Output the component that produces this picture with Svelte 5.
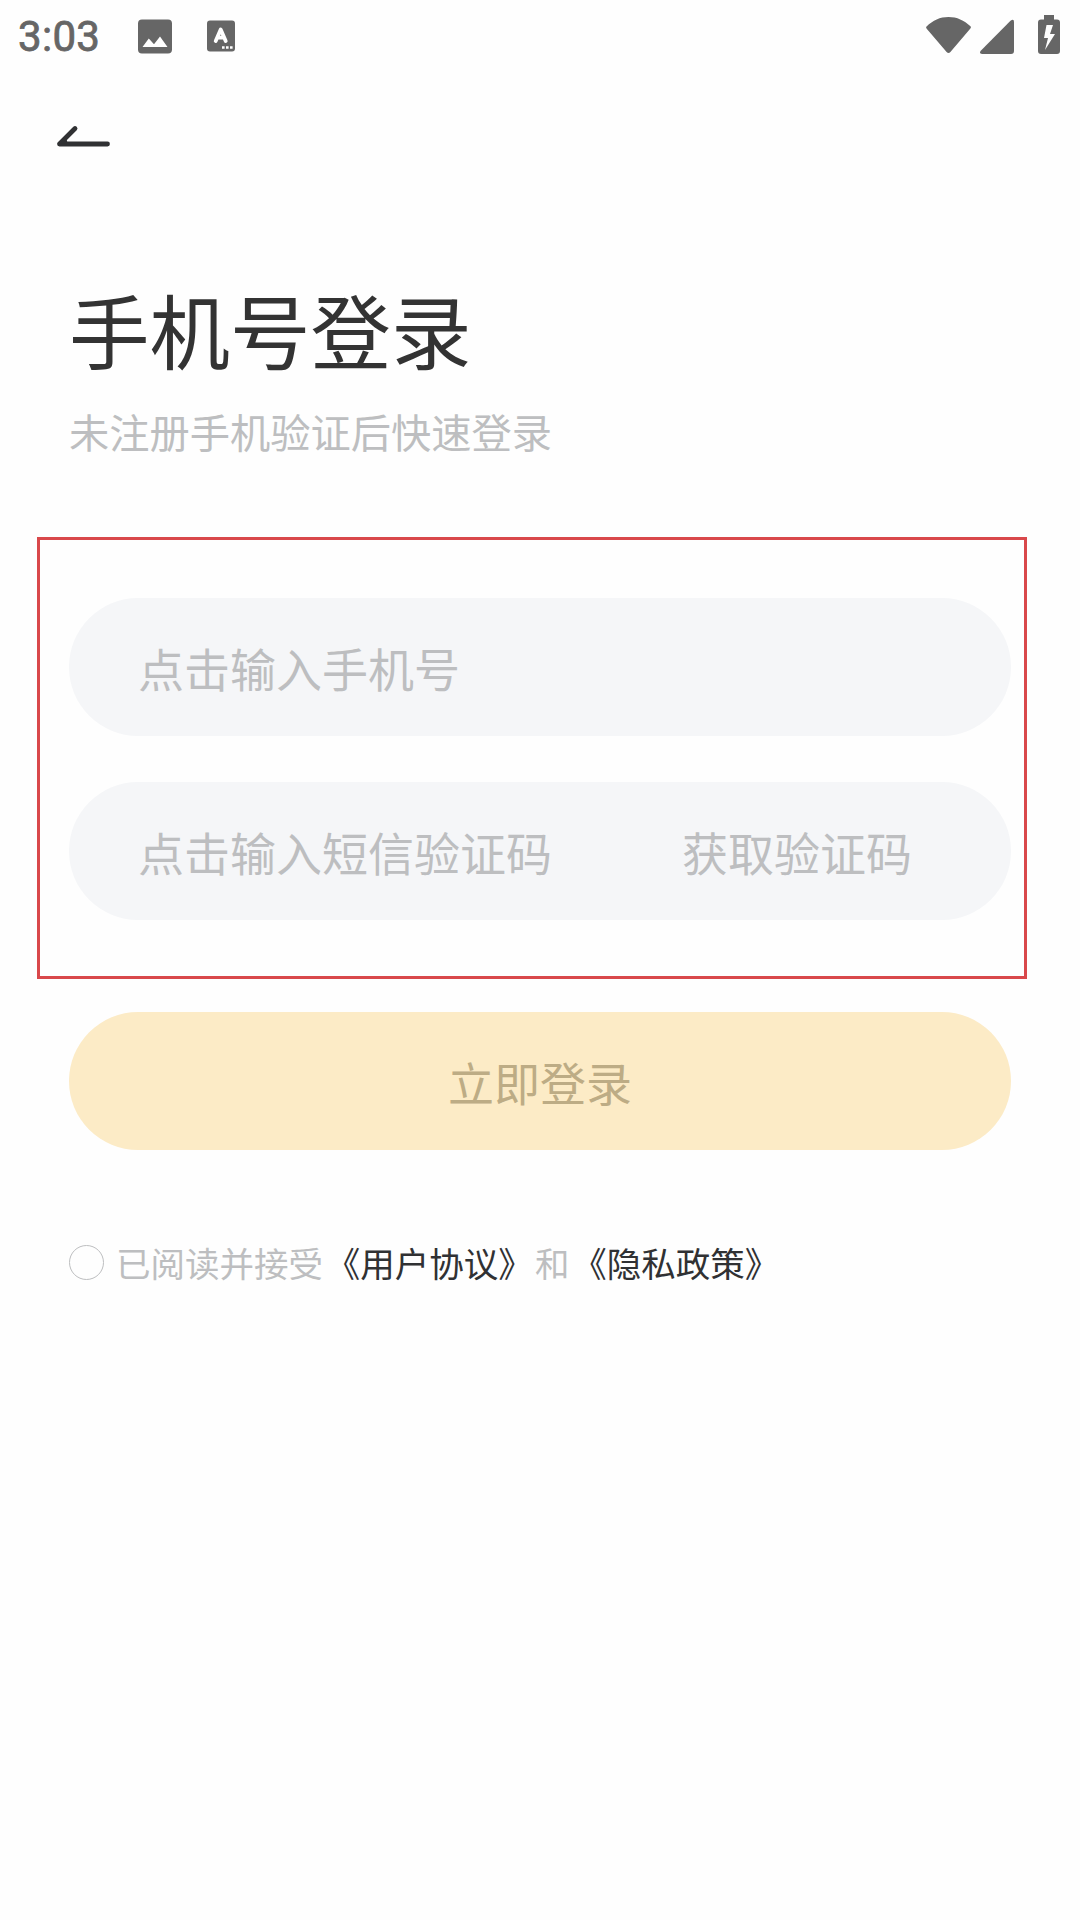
<script>
  let agreed = $state(false);
</script>

<main class="screen">
  <header class="status">
    <span class="time">3:03</span>
    <svg class="photo" width="34" height="35" viewBox="0 0 34 35">
      <path fill="#666" fill-rule="evenodd" d="M4 0.5h26a4 4 0 0 1 4 4v26a4 4 0 0 1-4 4H4a4 4 0 0 1-4-4v-26a4 4 0 0 1 4-4zM4.5 28h25L22 17.5l-6 7.7-5.200-5.700z" />
    </svg>
    <svg class="lang" width="28" height="32" viewBox="0 0 28 32">
      <rect y="0.500" width="28" height="31" rx="3" fill="#666" />
      <path d="M8.700 21 13.700 9.500 18.700 21M10.500 17.700h6.500" fill="none" stroke="#fff" stroke-width="3.800" stroke-linecap="round" stroke-linejoin="round" />
      <path d="M15 26.200h2.600v2.600H15zM19 26.200h2.600v2.600H19zM23 26.200h2.600v2.600H23z" fill="#fff" />
    </svg>
    <svg class="signals" width="136" height="42" viewBox="925 13 136 42">
      <g fill="#666">
        <path d="M926.500 26.500C933 20.300 940 17 948.500 17s15.500 3.300 22 9.300q1 1-.1 2.300l-20 23.500q-1.900 2-3.800 0l-19.900-23.300q-1.200-1.300-.2-2.300z" />
        <path d="M981 50.500 1010.500 20.700q3.500-2.200 3.500 1.300v29q0 3-3 3h-29q-3.500-.5-1-3.500z" />
        <path fill-rule="evenodd" d="M1044 15h10v4.500h3q3 0 3 3V51q0 3-3 3h-16q-3 0-3-3V22.500q0-3 3-3h3zM1046.500 25l-2.500 13h4l-3 12 10-16h-5l3-9z" />
      </g>
    </svg>
  </header>

  <nav class="nav">
    <svg width="54" height="22" viewBox="56 125 54 22">
      <path d="M107.500 144H59.500L75 128.500" fill="none" stroke="#303133" stroke-width="4.800" stroke-linecap="round" stroke-linejoin="round" />
      <path d="M59 143.500l7-6.500 1.500 6z" fill="#303133" />
    </svg>
  </nav>

  <section class="intro">
    <h1>手机号登录</h1>
    <p>未注册手机验证后快速登录</p>
  </section>

  <section class="fields">
    <div class="field"><span>点击输入手机号</span></div>
    <div class="field">
      <span>点击输入短信验证码</span>
      <span class="code">获取验证码</span>
    </div>
  </section>

  <button class="submit">立即登录</button>

  <footer class="terms">
    <button class="check" class:agreed aria-label="同意" onclick={() => (agreed = !agreed)}></button>
    <span>已阅读并接受</span><span class="link">《用户协议》</span><span class="and">和</span><span class="link">《隐私政策》</span>
  </footer>
</main>

<style>
  :global(body) {
    margin: 0;
    background: #fefefe;
  }
  .screen {
    box-sizing: border-box;
    width: 1080px;
    height: 1920px;
    display: flex;
    flex-direction: column;
    overflow: hidden;
    background: #fefefe;
    color: #bdbec0;
    font-family: "Noto Sans CJK SC", sans-serif;
    font-size: 46px;
  }
  .status {
    display: flex;
    align-items: center;
    height: 72px;
    padding: 0 19px 0 18px;
  }
  .time {
    width: 120px;
    font: 400 42px/72px Roboto, sans-serif;
    letter-spacing: 0.3px;
    -webkit-text-stroke: 0.8px #666;
    color: #666;
    padding-top: 2px;
  }
  .lang {
    margin-left: 35px;
  }
  .signals {
    margin-left: auto;
    margin-top: -4px;
  }
  .nav {
    height: 75px;
    padding-left: 56px;
    display: flex;
    align-items: flex-end;
  }
  .nav svg {
    display: block;
  }
  .intro {
    height: 390px;
    padding: 0 69px;
  }
  h1 {
    margin: 121px 0 0;
    font-size: 80.5px;
    font-weight: 400;
    line-height: 120px;
    color: #333;
  }
  p {
    margin: 13px 0 0;
    font-size: 40.250px;
    line-height: 60px;
  }
  .fields {
    box-sizing: border-box;
    width: 990px;
    height: 442px;
    margin-left: 37px;
    padding: 58px 13px 0 29px;
    border: 3px solid #d9484b;
    display: flex;
    flex-direction: column;
    gap: 46px;
  }
  .field {
    box-sizing: border-box;
    height: 138px;
    padding: 0 99px 1px 69px;
    display: flex;
    align-items: center;
    justify-content: space-between;
    border-radius: 69px;
    background: #f5f6f8;
  }
  .submit {
    width: 942px;
    height: 138px;
    margin: 33px 0 0 69px;
    padding: 0;
    border: 0;
    border-radius: 69px;
    background: #fcebc6;
    color: #bdac85;
    font: inherit;
  }
  .terms {
    display: flex;
    align-items: center;
    height: 60px;
    margin-top: 82px;
    padding-left: 69px;
    font-size: 34.500px;
    line-height: 60px;
  }
  .check {
    box-sizing: border-box;
    width: 35px;
    height: 35px;
    margin: 0 12px 0 0;
    padding: 0;
    border: 1px solid #bdbec0;
    border-radius: 50%;
    background: none;
  }
  .check.agreed {
    background: #fbd27a;
  }
  .link {
    margin-left: 2.700px;
    color: #303133;
  }
  .and {
    margin-left: 2.300px;
  }
</style>
